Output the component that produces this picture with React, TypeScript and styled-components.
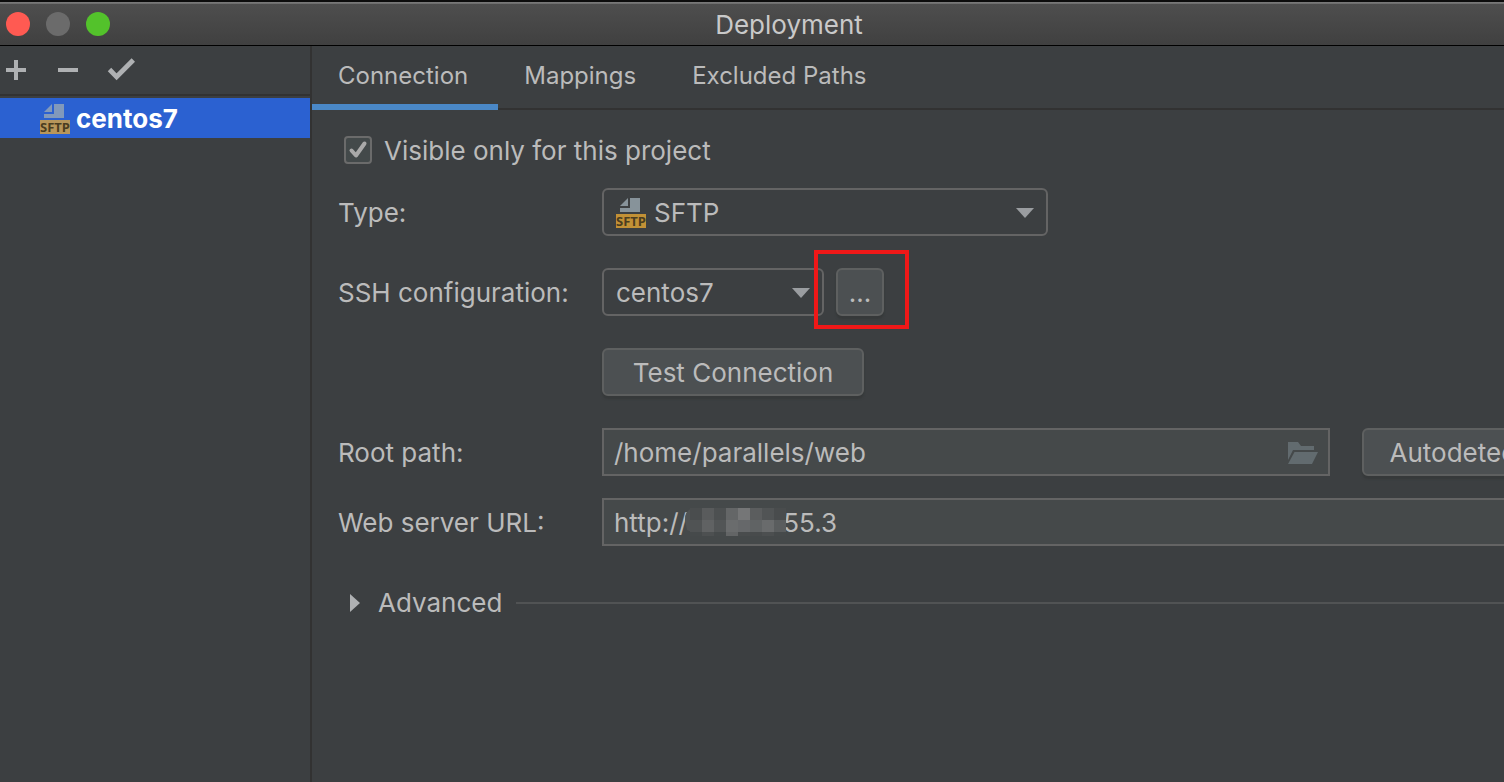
import React from "react";
import styled, { createGlobalStyle } from "styled-components";

const c = {
  bg: "#3c3f41",
  field: "#45494a",
  border: "#646464",
  buttonBg: "#4c5052",
  buttonBorder: "#5e6060",
  text: "#bbbbbb",
  line: "#323232",
  icon: "#afb1b3",
  arrow: "#9a9da0",
  selection: "#2b61d1",
  tab: "#4a88c7",
  highlight: "#f01818",
};

const GlobalStyle = createGlobalStyle`
  *, *::before, *::after { box-sizing: border-box; }
  body { margin: 0; background: ${c.bg}; }
  body, button, input, select {
    font-family: Inter, "Noto Sans", sans-serif;
    font-size: 26px;
    line-height: 32px;
    color: ${c.text};
  }
`;

const Viewport = styled.div`
  overflow: hidden;
  min-height: 100vh;
  display: flex;
`;

/* The dialog is wider than the visible area and runs off its right side. */
const Dialog = styled.div`
  flex: 0 0 calc(100% + 74px);
  display: flex;
  flex-direction: column;
`;

const TitleBar = styled.header`
  display: grid;
  grid-template-columns: 1fr auto 1fr;
  align-items: center;
  height: 46px;
  padding: 2px 6px 0;
  border-top: 2px solid #0c0c0c;
  border-bottom: 1px solid #000;
  background: linear-gradient(#7c7c7c 0, #6a6a6a 2px, #4e4e4e 2px, #404040 100%);
`;

const Lights = styled.div`
  display: flex;
  gap: 16px;
  padding-bottom: 2px;
`;

const Light = styled.button<{ $color: string }>`
  width: 24px;
  height: 24px;
  padding: 0;
  border: 0;
  border-radius: 50%;
  background: ${(p) => p.$color};
`;

const Title = styled.h1`
  margin: 0;
  font-size: 26px;
  font-weight: 400;
  color: #c9c9c9;
`;

const Columns = styled.div`
  flex: 1;
  display: flex;
`;

const Sidebar = styled.aside`
  flex: 0 0 312px;
  border-right: 2px solid ${c.line};
`;

const Toolbar = styled.div`
  display: flex;
  align-items: center;
  gap: 20px;
  height: 50px;
  border-bottom: 2px solid ${c.line};
`;

const ToolButton = styled.button`
  display: flex;
  width: 32px;
  height: 32px;
  padding: 0;
  border: 0;
  background: none;
`;

const ServerList = styled.ul`
  margin: 2px 0 0;
  padding: 0;
  list-style: none;
`;

const ServerItem = styled.li`
  display: flex;
  align-items: center;
  gap: 6px;
  height: 40px;
  padding: 2px 0 0 40px;
  background: ${c.selection};
  color: #fff;
  font-weight: 700;
`;

const Main = styled.main`
  flex: 1;
  min-width: 0;
`;

const Tabs = styled.div`
  display: flex;
  height: 64px;
  border-bottom: 2px solid ${c.line};
`;

const Tab = styled.button<{ $active?: boolean }>`
  height: 64px;
  padding: 2px 30px 0 26px;
  border: 0;
  border-bottom: 6px solid ${(p) => (p.$active ? c.tab : "transparent")};
  background: none;
  font-size: 24px;
`;

const Form = styled.form`
  display: flex;
  flex-direction: column;
  padding: 24px 26px;
`;

const CheckRow = styled.label`
  display: flex;
  align-items: center;
  gap: 12px;
  height: 32px;
  padding-left: 6px;
`;

const CheckText = styled.span`
  padding-top: 2px;
`;

const CheckHolder = styled.span`
  position: relative;
  display: flex;

  svg {
    position: absolute;
    inset: 0;
    pointer-events: none;
  }
`;

const CheckInput = styled.input`
  appearance: none;
  width: 28px;
  height: 28px;
  margin: 0;
  border: 2px solid #6b6b6b;
  border-radius: 4px;
  background: #43494a;
`;

const Row = styled.div<{ $gap: number }>`
  display: grid;
  grid-template-columns: 264px minmax(0, 1fr);
  align-items: center;
  height: 48px;
  margin-top: ${(p) => p.$gap}px;
`;

const Label = styled.label`
  padding-top: 2px;
`;

const Controls = styled.div<{ $gap?: number }>`
  grid-column: 2;
  display: flex;
  gap: ${(p) => p.$gap ?? 0}px;
`;

const SelectHolder = styled.div<{ $width: number }>`
  position: relative;
  width: ${(p) => p.$width}px;
`;

const SelectInput = styled.select<{ $withIcon?: boolean }>`
  appearance: none;
  display: block;
  width: 100%;
  height: 48px;
  padding: 2px 36px 0 ${(p) => (p.$withIcon ? 50 : 12)}px;
  border: 2px solid ${c.border};
  border-radius: 6px;
  background: ${c.bg};
`;

const SelectIcon = styled.span`
  position: absolute;
  left: 14px;
  top: 10px;
  display: flex;
  pointer-events: none;
`;

const SelectArrow = styled.svg`
  position: absolute;
  right: 14px;
  top: 20px;
  pointer-events: none;
`;

const Button = styled.button<{ $width: number }>`
  flex: 0 0 ${(p) => p.$width}px;
  height: 48px;
  padding: 2px 0 0;
  border: 2px solid ${c.buttonBorder};
  border-radius: 6px;
  background: ${c.buttonBg};
  box-shadow: 0 3px 2px #36393a;
  white-space: nowrap;
`;

const Highlighted = styled.div`
  position: relative;
  display: flex;

  &::after {
    content: "";
    position: absolute;
    left: -22px;
    top: -18px;
    width: 95px;
    height: 79px;
    border: 4px solid ${c.highlight};
    pointer-events: none;
  }
`;

const FieldHolder = styled.div`
  position: relative;
  flex: 1;
  min-width: 0;
`;

const Field = styled.input`
  display: block;
  width: 100%;
  height: 48px;
  padding: 0 10px;
  border: 2px solid ${c.border};
  border-radius: 0;
  background: ${c.field};
`;

const BrowseButton = styled.button`
  position: absolute;
  right: 12px;
  top: 14px;
  display: flex;
  padding: 0;
  border: 0;
  background: none;
`;

const Mosaic = styled.svg`
  position: absolute;
  left: 82px;
  top: 10px;
  pointer-events: none;
`;

const Advanced = styled.div`
  display: flex;
  align-items: center;
  gap: 14px;
  height: 50px;
  margin-top: 32px;
`;

const Disclosure = styled.button`
  display: flex;
  align-items: center;
  gap: 18px;
  padding: 0 0 0 12px;
  border: 0;
  background: none;
`;

const Rule = styled.hr`
  flex: 1;
  height: 2px;
  margin: 0;
  border: 0;
  background: #515354;
`;

const Badge = styled.svg`
  flex: none;
  overflow: visible;
`;

function SftpIcon({ dimmed }: { dimmed?: boolean }) {
  const sheet = dimmed ? "#8199bb" : "#87939a";
  return (
    <Badge width="30" height="30" viewBox="0 0 30 30" aria-hidden="true">
      <path d="M4 8 L12 0 V8 Z" fill={sheet} />
      <path d="M14 0 H24 V14 H4 V10 H14 Z" fill={sheet} />
      <rect y="16" width="30" height="14" fill={dimmed ? "#b8965a" : "#c29136"} />
      <text
        x="15"
        y="28"
        textAnchor="middle"
        fontFamily="Open Sans, sans-serif"
        fontSize="13"
        fontWeight="700"
        fill="#4b3d20"
      >
        SFTP
      </text>
    </Badge>
  );
}

function Arrow() {
  return (
    <SelectArrow width="18" height="10" viewBox="0 0 18 10" aria-hidden="true">
      <path d="M0 0 H18 L9 10 Z" fill={c.arrow} />
    </SelectArrow>
  );
}

const mosaicRows = [
  { y: 0, h: 12, fills: ["#4a4d4e", "#595b5c", "#4d5051", "#646667", "#757677", "#5b5d5e", "#515455", "#494c4d"] },
  { y: 12, h: 12, fills: ["#505354", "#606263", "#525556", "#6a6c6d", "#66686a", "#606364", "#696b6c", "#5a5d5e"] },
  { y: 24, h: 4, fills: ["#464a4b", "#4d5051", "#464a4b", "#636566", "#494c4d", "#484b4c", "#4c4f50", "#464a4b"] },
];

export default function App() {
  return (
    <>
      <GlobalStyle />
      <Viewport>
        <Dialog>
          <TitleBar>
            <Lights>
              <Light type="button" $color="#ff5a52" aria-label="Close" />
              <Light type="button" $color="#6b6b6b" aria-label="Minimize" />
              <Light type="button" $color="#53c22b" aria-label="Zoom" />
            </Lights>
            <Title>Deployment</Title>
          </TitleBar>
          <Columns>
            <Sidebar>
              <Toolbar>
                <ToolButton type="button" aria-label="Add">
                  <svg width="32" height="32" viewBox="0 0 32 32">
                    <path d="M6 16 H26 M16 6 V26" stroke={c.icon} strokeWidth="4" />
                  </svg>
                </ToolButton>
                <ToolButton type="button" aria-label="Remove">
                  <svg width="32" height="32" viewBox="0 0 32 32">
                    <path d="M6 16 H26" stroke={c.icon} strokeWidth="4" />
                  </svg>
                </ToolButton>
                <ToolButton type="button" aria-label="Use as default">
                  <svg width="32" height="32" viewBox="0 0 32 32">
                    <path d="M5.5 15.5 L12.6 22.8 L29.3 6" fill="none" stroke={c.icon} strokeWidth="4.8" />
                  </svg>
                </ToolButton>
              </Toolbar>
              <ServerList>
                <ServerItem>
                  <SftpIcon dimmed />
                  centos7
                </ServerItem>
              </ServerList>
            </Sidebar>
            <Main>
              <Tabs role="tablist">
                <Tab type="button" role="tab" aria-selected $active>Connection</Tab>
                <Tab type="button" role="tab">Mappings</Tab>
                <Tab type="button" role="tab">Excluded Paths</Tab>
              </Tabs>
              <Form>
                <CheckRow>
                  <CheckHolder>
                    <CheckInput type="checkbox" defaultChecked />
                    <svg width="28" height="28" viewBox="0 0 28 28" aria-hidden="true">
                      <path
                        d="M7.5 14.5 L12 19.5 L20.5 7.5"
                        fill="none"
                        stroke="#a9a9a9"
                        strokeWidth="4"
                        strokeLinecap="round"
                        strokeLinejoin="round"
                      />
                    </svg>
                  </CheckHolder>
                  <CheckText>Visible only for this project</CheckText>
                </CheckRow>
                <Row $gap={22}>
                  <Label htmlFor="type">Type:</Label>
                  <Controls>
                    <SelectHolder $width={446}>
                      <SelectInput id="type" $withIcon>
                        <option>SFTP</option>
                      </SelectInput>
                      <SelectIcon><SftpIcon /></SelectIcon>
                      <Arrow />
                    </SelectHolder>
                  </Controls>
                </Row>
                <Row $gap={32}>
                  <Label htmlFor="ssh">SSH configuration:</Label>
                  <Controls $gap={12}>
                    <SelectHolder $width={222}>
                      <SelectInput id="ssh">
                        <option>centos7</option>
                      </SelectInput>
                      <Arrow />
                    </SelectHolder>
                    <Highlighted>
                      <Button type="button" $width={48}>...</Button>
                    </Highlighted>
                  </Controls>
                </Row>
                <Row $gap={32}>
                  <Controls>
                    <Button type="button" $width={262}>Test Connection</Button>
                  </Controls>
                </Row>
                <Row $gap={32}>
                  <Label htmlFor="root">Root path:</Label>
                  <Controls $gap={32}>
                    <FieldHolder>
                      <Field id="root" defaultValue="/home/parallels/web" />
                      <BrowseButton type="button" aria-label="Browse">
                        <svg width="30" height="22" viewBox="0 0 30 22">
                          <path d="M0 0 H10 L13 4 H26 V8 H5 L0 18 Z" fill="#626b6f" />
                          <path d="M6.5 10 H30 L24 22 H0 Z" fill="#626b6f" />
                        </svg>
                      </BrowseButton>
                    </FieldHolder>
                    <Button type="button" $width={190}>Autodetect</Button>
                  </Controls>
                </Row>
                <Row $gap={22}>
                  <Label htmlFor="url">Web server URL:</Label>
                  <Controls>
                    <FieldHolder>
                      <Field id="url" defaultValue={"http://\u2003\u2003\u2003\u2002\u200655.3"} />
                      <Mosaic width="104" height="28" viewBox="0 0 104 28" aria-hidden="true">
                        <path d="M8 0 Q0 4 1 12 L3 22 L8 24 Z" fill="#505354" />
                        {mosaicRows.map((row) =>
                          row.fills.map((fill, i) => (
                            <rect key={`${row.y}-${i}`} x={6 + i * 12} y={row.y} width="12" height={row.h} fill={fill} />
                          ))
                        )}
                      </Mosaic>
                    </FieldHolder>
                  </Controls>
                </Row>
                <Advanced>
                  <Disclosure type="button" aria-expanded={false}>
                    <svg width="10" height="18" viewBox="0 0 10 18" aria-hidden="true">
                      <path d="M0 0 L10 9 L0 18 Z" fill={c.icon} />
                    </svg>
                    Advanced
                  </Disclosure>
                  <Rule />
                </Advanced>
              </Form>
            </Main>
          </Columns>
        </Dialog>
      </Viewport>
    </>
  );
}
